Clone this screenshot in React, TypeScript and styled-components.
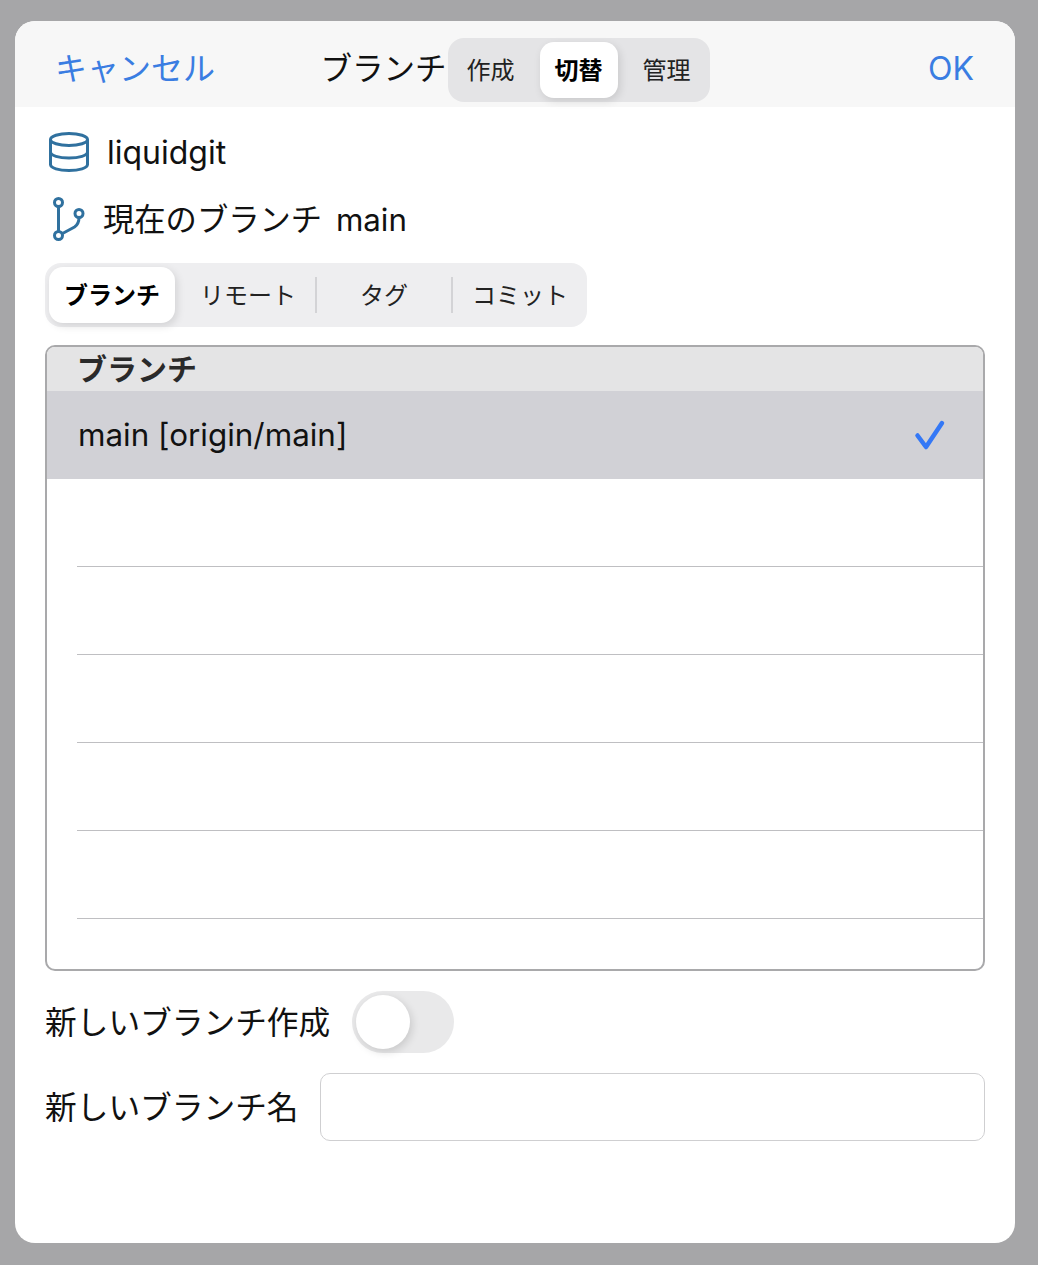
import styled, { createGlobalStyle } from "styled-components";

const FONT = `Inter, "Noto Sans CJK JP", sans-serif`;
const ICON_BLUE = "#30719f";

const GlobalStyle = createGlobalStyle`
	html, body {
		margin: 0;
		padding: 0;
		background: #a6a6a8;
	}
	body {
		font-family: ${FONT};
		color: #111;
	}
`;

const Page = styled.div`
	width: 1038px;
	height: 1265px;
	padding: 21px 23px 22px 15px;
	box-sizing: border-box;
`;
const Modal = styled.div`
	height: 100%;
	background: #fff;
	border-radius: 20px;
	overflow: hidden;
	display: flex;
	flex-direction: column;
`;
const Header = styled.header`
	height: 86px;
	flex: none;
	box-sizing: border-box;
	background: #f7f7f7;
	display: grid;
	grid-template-columns: 1fr auto 1fr;
	align-items: center;
	padding: 12px 41px 0;
`;
const NavButton = styled.button<{ $end?: boolean }>`
	border: none;
	background: none;
	padding: 0 0 2px;
	margin-left: ${(p) => (p.$end ? 0 : -1)}px;
	font: inherit;
	font-size: 32px;
	line-height: 40px;
	color: #3a7de2;
	justify-self: ${(p) => (p.$end ? "end" : "start")};
`;
const TitleGroup = styled.div`
	display: flex;
	align-items: center;
	gap: 1px;
`;
const Title = styled.h1`
	margin: 0;
	padding-bottom: 2px;
	font-size: 31.5px;
	font-weight: 400;
	line-height: 40px;
`;
const Segments = styled.div<{ $light?: boolean }>`
	display: flex;
	gap: 10px;
	align-items: center;
	padding: 4px;
	height: 64px;
	box-sizing: border-box;
	border-radius: 16px;
	background: ${(p) => (p.$light ? "#eeeef0" : "#e4e4e6")};
`;
const SubSegments = styled(Segments)`
	gap: 4px;
	width: 542px;
	margin-top: 22px;
`;
const Segment = styled.div<{ $active?: boolean; $width: number }>`
	width: ${(p) => p.$width}px;
	height: 56px;
	flex: none;
	box-sizing: border-box;
	padding-bottom: 3px;
	display: flex;
	align-items: center;
	justify-content: center;
	border-radius: 14px;
	font-size: 24px;
	font-weight: ${(p) => (p.$active ? 700 : 400)};
	color: ${(p) => (p.$active ? "#000" : "#222")};
	background: ${(p) => (p.$active ? "#fff" : "transparent")};
	box-shadow: ${(p) => (p.$active ? "2px 3px 8px rgba(0, 0, 0, 0.12)" : "none")};
`;
const SegmentDivider = styled.span<{ $hidden?: boolean }>`
	width: 2px;
	height: 36px;
	flex: none;
	background: ${(p) => (p.$hidden ? "transparent" : "#d3d3d6")};
`;
const Body = styled.main`
	flex: 1;
	padding: 25px 30px 0;
	display: flex;
	flex-direction: column;
`;
const RepoRow = styled.div`
	display: flex;
	align-items: center;
	gap: 17px;
	height: 40px;
	padding-left: 3px;
	font-size: 32px;
`;
const BranchRow = styled.div`
	display: flex;
	align-items: center;
	gap: 18px;
	height: 44px;
	margin-top: 25px;
	padding-left: 8px;
	font-size: 31.3px;
	word-spacing: 5px;
`;
const Label = styled.span`
	padding-bottom: 4px;
`;
const List = styled.section`
	height: 626px;
	margin-top: 18px;
	flex: none;
	box-sizing: border-box;
	border: 2px solid #a9a9ab;
	border-radius: 10px;
	overflow: hidden;
`;
const ListHeader = styled.div`
	height: 44px;
	box-sizing: border-box;
	background: #e4e4e5;
	padding-left: 30px;
	font-size: 30px;
	font-weight: 700;
	line-height: 44px;
	color: #2a2a2a;
`;
const SelectedRow = styled.div`
	height: 88px;
	background: #d1d1d6;
	display: flex;
	align-items: center;
	justify-content: space-between;
	padding: 0 37px 0 31px;
	font-size: 31.4px;
`;
const EmptyRow = styled.div`
	height: 88px;
	margin-left: 30px;
	box-sizing: border-box;
	border-bottom: 1px solid #bfbfc2;
`;
const FieldRow = styled.div<{ $gap: number; $top: number }>`
	display: flex;
	align-items: center;
	gap: ${(p) => p.$gap}px;
	margin-top: ${(p) => p.$top}px;
	font-size: 31.7px;
`;
const Toggle = styled.div`
	width: 102px;
	height: 62px;
	padding: 4px;
	box-sizing: border-box;
	border-radius: 31px;
	background: #e9e9ea;
`;
const Knob = styled.div`
	width: 54px;
	height: 54px;
	border-radius: 50%;
	background: #fff;
	box-shadow: 2px 3px 8px rgba(0, 0, 0, 0.14);
`;
const NameInput = styled.input`
	flex: 1;
	height: 68px;
	box-sizing: border-box;
	border: 1px solid #cfcfd1;
	border-radius: 10px;
	background: #fff;
	font: inherit;
`;

const DatabaseIcon = () => (
	<svg width="42" height="42" viewBox="0 0 42 42" fill="none" stroke={ICON_BLUE} strokeWidth="3">
		<ellipse cx="21" cy="8.5" rx="18.5" ry="6" />
		<path d="M2.5 8.5v25c0 3.5 8.3 6 18.5 6s18.5-2.5 18.5-6v-25" />
		<path d="M2.5 21c0 3.5 8.3 6 18.5 6s18.5-2.5 18.5-6" />
	</svg>
);

const BranchIcon = () => (
	<svg width="32" height="44" viewBox="0 0 32 44" fill="none" stroke={ICON_BLUE} strokeWidth="3">
		<circle cx="5.5" cy="5.5" r="4" />
		<circle cx="26" cy="16.5" r="4" />
		<circle cx="5.5" cy="38.5" r="4" />
		<path d="M5.5 9.5v25" />
		<path d="M26 20.5c0 5-1.5 7.5-4.5 9.5L9.5 36.5" />
	</svg>
);

const CheckIcon = () => (
	<svg width="32" height="32" viewBox="0 0 32 32" fill="none" stroke="#3478f6" strokeWidth="4.5" strokeLinecap="round" strokeLinejoin="round">
		<path d="M3.5 16.5l8.5 11.5L28 4" />
	</svg>
);

const EMPTY_ROWS = [0, 1, 2, 3, 4];

export default function App() {
	return <Page>
		<GlobalStyle />
		<Modal>
			<Header>
				<NavButton>キャンセル</NavButton>
				<TitleGroup>
					<Title>ブランチ</Title>
					<Segments>
						<Segment $width={78}>作成</Segment>
						<Segment $width={78} $active>切替</Segment>
						<Segment $width={78}>管理</Segment>
					</Segments>
				</TitleGroup>
				<NavButton $end>OK</NavButton>
			</Header>
			<Body>
				<RepoRow>
					<DatabaseIcon />
					liquidgit
				</RepoRow>
				<BranchRow>
					<BranchIcon />
					<Label>現在のブランチ main</Label>
				</BranchRow>
				<SubSegments $light>
					<Segment $width={126} $active>ブランチ</Segment>
					<SegmentDivider $hidden />
					<Segment $width={126}>リモート</Segment>
					<SegmentDivider />
					<Segment $width={126}>タグ</Segment>
					<SegmentDivider />
					<Segment $width={126}>コミット</Segment>
				</SubSegments>
				<List>
					<ListHeader>ブランチ</ListHeader>
					<SelectedRow>
						main [origin/main]
						<CheckIcon />
					</SelectedRow>
					{EMPTY_ROWS.map((i) => (
						<EmptyRow key={i} />
					))}
				</List>
				<FieldRow $gap={22} $top={20}>
					<Label>新しいブランチ作成</Label>
					<Toggle>
						<Knob />
					</Toggle>
				</FieldRow>
				<FieldRow $gap={21} $top={20}>
					<Label>新しいブランチ名</Label>
					<NameInput />
				</FieldRow>
			</Body>
		</Modal>
	</Page>
}
